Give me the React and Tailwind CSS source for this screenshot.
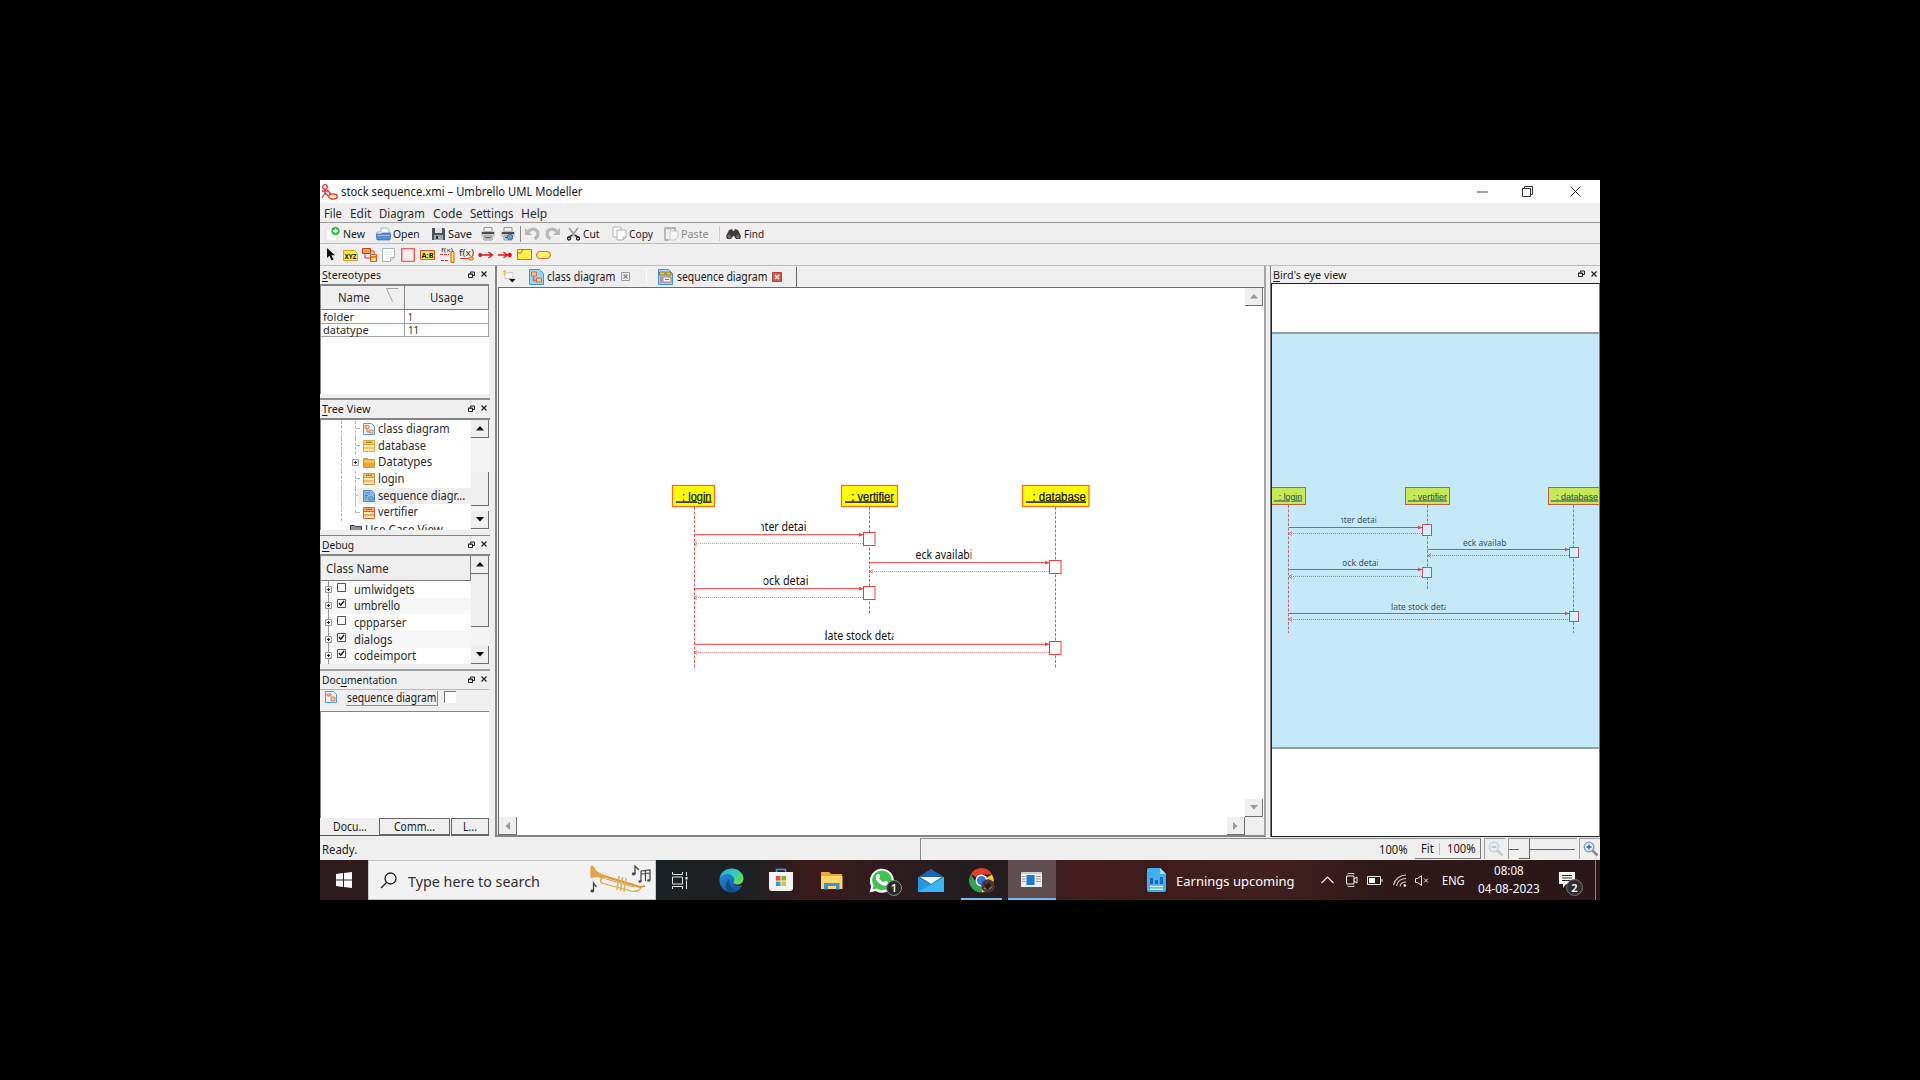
import { useLayoutEffect, useRef } from "react";

// Single line of text squeezed or stretched to the width of its box.
function Fit({ className = "", children }) {
  const box = useRef(null);
  const ink = useRef(null);
  useLayoutEffect(() => {
    const w = ink.current.offsetWidth;
    if (w) ink.current.style.transform = `scaleX(${box.current.offsetWidth / w})`;
  }, []);
  return (
    <span ref={box} className={"block shrink-0 whitespace-nowrap leading-none " + className}>
      <span ref={ink} className="inline-block origin-left">{children}</span>
    </span>
  );
}

function Svg({ w, h, className = "", children }) {
  return (
    <svg width={w} height={h} viewBox={`0 0 ${w} ${h}`} fill="none" className={"block shrink-0 " + className}>
      {children}
    </svg>
  );
}

/* ---------- toolbar icons ---------- */
const AppIcon = () => (
  <Svg w={17} h={16} className="ml-[1px]">
    <circle cx="4" cy="3" r="2.3" stroke="#d8392f" strokeWidth="1.3" />
    <path d="M1 7h7M4 5.5v4M4 9l-3 5M4 9l3 3 3 1M6 6l4 4" stroke="#d8392f" strokeWidth="1.3" />
    <ellipse cx="12" cy="12.5" rx="4.2" ry="2.6" fill="#fbe9a0" stroke="#d8392f" strokeWidth="1.3" />
  </Svg>
);
const NewIcon = () => (
  <Svg w={15} h={16} className="ml-[5px]">
    <path d="M1 3h8l3 3v9H1z" fill="#fafafa" stroke="#ddd" strokeWidth=".8" />
    <circle cx="10.5" cy="5" r="4.2" fill="#3fb34f" />
    <path d="M10.5 2.5v5M8 5h5" stroke="#fff" strokeWidth="1.5" />
  </Svg>
);
const OpenIcon = () => (
  <Svg w={15} h={14} className="ml-[11px]">
    <path d="M1 5h4V1h6l2 2v6H1z" fill="#f6f8fa" stroke="#9aa6b4" strokeWidth=".8" />
    <path d="M0 7h5l1-1h9l-1 7H1z" fill="#5b8fcf" stroke="#3d6ba8" strokeWidth=".7" />
    <path d="M1.5 8.5h12" stroke="#9cc0ea" />
  </Svg>
);
const SaveIcon = () => (
  <Svg w={15} h={14} className="ml-[11px]">
    <path d="M1 1h12l1 1v11H1z" fill="#4d5258" />
    <path d="M4 1h7v5H4z" fill="#dfe3e6" />
    <path d="M3 8h9v5H3z" fill="#9fa6ad" />
    <path d="M5 9h2v3H5z" fill="#33373b" />
  </Svg>
);
const PrintIcon = ({ preview }) => (
  <Svg w={14} h={14} className={preview ? "ml-[6px]" : "ml-[9px]"}>
    <path d="M3 .5h8v4H3z" fill="#eee" stroke="#777" strokeWidth=".7" />
    <path d="M0 4.5h14v5H0z" fill="#c9c9c9" />
    <path d="M1 6h12" stroke="#3d3d3d" strokeWidth="1.8" />
    <path d="M3 9h8v4H3z" fill="#eee" stroke="#777" strokeWidth=".7" />
    <path d="M4 10.7h6" stroke="#444" strokeWidth="1.2" />
    {preview && <circle cx="9" cy="10" r="2.8" fill="#6a9bc8" stroke="#4b6d8e" />}
  </Svg>
);
const UndoIcon = ({ redo }) => (
  <Svg w={15} h={13} className={redo ? "ml-[5px] -scale-x-100" : "ml-[4px]"}>
    <path d="M3 4.500C7 .5 13.500 2 12.800 7.500c-.2 2-1.500 3.500-3.300 4.300" stroke="#b9b9b9" strokeWidth="3.200" />
    <path d="M0 1v7h7z" fill="#b9b9b9" />
  </Svg>
);
const CutIcon = () => (
  <Svg w={13} h={14} className="ml-[7px]">
    <path d="M2 1l7 9M11 1L4 10" stroke="#9a9a9a" strokeWidth="1.6" />
    <path d="M5 8l-3 2M8 8l3 2" stroke="#222" strokeWidth="1.4" />
    <circle cx="2" cy="11.500" r="1.500" stroke="#222" strokeWidth="1.3" />
    <circle cx="11" cy="11.500" r="1.500" stroke="#222" strokeWidth="1.3" />
  </Svg>
);
const CopyIcon = () => (
  <Svg w={15} h={15} className="ml-[12px]">
    <path d="M1 1h8v10H1z" fill="#fcfcfc" stroke="#a9a9a9" strokeWidth=".8" />
    <path d="M5 4h9v7l-3 3H5z" fill="#fff" stroke="#a0a0a0" strokeWidth=".8" />
    <path d="M14 11h-3v3" stroke="#a0a0a0" strokeWidth=".8" />
  </Svg>
);
const PasteIcon = () => (
  <Svg w={15} h={15} className="ml-[11px]">
    <path d="M5 14H1V2h10v3" stroke="#a4a4a4" strokeWidth="1.4" />
    <path d="M3.500 1h5v2.500h-5z" fill="#b5b5b5" />
    <path d="M6 5h8v6l-3 3H6z" fill="#f5f5f5" stroke="#bbb" strokeWidth=".8" />
  </Svg>
);
const FindIcon = () => (
  <Svg w={15} h={12} className="ml-[6px]">
    <path d="M3 2l3-1 1 2h1l1-2 3 1 3 6-1 3h-4L8 8H7l-2 3H1L0 8z" fill="#403b39" />
    <circle cx="3.200" cy="8.500" r="1.700" fill="#77706c" />
    <circle cx="11.800" cy="8.500" r="1.700" fill="#77706c" />
  </Svg>
);

function DiagramTools() {
  return (
    <div className="flex h-[22px] items-center border-b border-[#bdbdbd]">
      <Svg w={9} h={13} className="ml-[7px]">
        <path d="M0 0v10l2.500-2.200L4.500 12.500l2-1-2-4.200H8z" fill="#111" />
      </Svg>
      <Svg w={15} h={12} className="ml-[7px]">
        <path d="M.5 1.500h11l3 3v7H.5z" fill="#fce94f" stroke="#e49a2c" />
        <text x="1.500" y="9.500" fontSize="6.500" fontWeight="700" fill="#222" textLength="12" lengthAdjust="spacingAndGlyphs">XYZ</text>
      </Svg>
      <Svg w={15} h={15} className="ml-[4px]">
        <path d="M.5 1.500h8v5h-8z" fill="#f0a830" stroke="#c8372d" />
        <path d="M3 7v4h5M9 4h3v3" stroke="#c8372d" />
        <path d="M8.500 7.500h6v7h-6z" fill="#fde36a" stroke="#e0542c" />
        <path d="M9 10h5" stroke="#e0542c" strokeWidth="1.400" />
      </Svg>
      <Svg w={13} h={14} className="ml-[5px]">
        <path d="M.5.5h12v9l-4 4h-8z" fill="#fdfdfd" stroke="#a9b3bd" />
        <path d="M12.500 9.500h-4v4" fill="#e3e7ea" stroke="#a9b3bd" />
        <path d="M3 4h7M3 6.500h7" stroke="#dde2e6" />
      </Svg>
      <Svg w={14} h={14} className="ml-[6px]">
        <path d="M.75.75h12.500v12.500H.75z" fill="#f7eeee" stroke="#ee3b36" strokeWidth="1.200" />
      </Svg>
      <Svg w={15} h={10} className="ml-[5px]">
        <path d="M.5.5h14v9H.5z" fill="#fce94f" stroke="#e0542c" />
        <text x="1.500" y="7.500" fontSize="7" fontWeight="700" fill="#111" textLength="12" lengthAdjust="spacingAndGlyphs">A:B</text>
      </Svg>
      <Svg w={15} h={16} className="ml-[5px]">
        <text x="1" y="5" fontSize="6" fill="#333" textLength="12" lengthAdjust="spacingAndGlyphs">f(x)</text>
        <path d="M0 7.500h9M1 13.500h7" stroke="#e33" strokeDasharray="3 1" />
        <path d="M11 4.500h3v11h-3z" fill="#fce94f" stroke="#e0542c" />
      </Svg>
      <Svg w={16} h={13} className="ml-[4px]">
        <text x="0" y="8" fontSize="8.500" fill="#333" textLength="15" lengthAdjust="spacingAndGlyphs">f(x)</text>
        <path d="M1 10.500h14" stroke="#e7401f" />
        <ellipse cx="12" cy="10.500" rx="2.500" ry="1.500" fill="#fce94f" stroke="#e7401f" />
      </Svg>
      <Svg w={16} h={8} className="ml-[3px]">
        <path d="M2 4h12M10.500 1l4 3-4 3" stroke="#e8130c" strokeWidth="1.300" />
        <circle cx="2.200" cy="4" r="2" fill="#e8130c" />
      </Svg>
      <Svg w={16} h={8} className="ml-[3px]">
        <path d="M1 4h12M6.500 1.200l4 2.800-4 2.800" stroke="#e8130c" strokeWidth="1.300" />
        <circle cx="12.700" cy="4" r="2.200" fill="#e8130c" />
      </Svg>
      <Svg w={15} h={11} className="ml-[4px]">
        <path d="M.5.5h14v10H.5z" fill="#fff04d" stroke="#e0642c" />
        <path d="M1 4h3l1.500-3" stroke="#e0642c" />
      </Svg>
      <Svg w={15} h={8} className="ml-[4px]">
        <rect x=".5" y=".5" width="14" height="7" rx="3.500" fill="#fff36a" stroke="#e0642c" />
      </Svg>
    </div>
  );
}

/* ---------- small shared pieces ---------- */
const FloatClose = () => (
  <>
    <Svg w={7} h={7} className="-mt-[2px] ml-auto">
      <path d="M2.500 2V1h4v3.500H5" stroke="#222" />
      <path d="M.5 3h4v3.500h-4zM.5 3.200h4" stroke="#222" />
    </Svg>
    <Svg w={6} h={6} className="-mt-[2px] ml-[6px]">
      <path d="M.5.5l5 5M5.500.5l-5 5" stroke="#222" strokeWidth="1.200" />
    </Svg>
  </>
);

function DockTitle({ className, first, mid, rest }) {
  return (
    <div className="flex h-[18px] shrink-0 items-center pl-[2px] pr-[3px] text-[11.500px]">
      <Fit className={className}>
        {first}
        <span className="underline underline-offset-2">{mid}</span>
        {rest}
      </Fit>
      <FloatClose />
    </div>
  );
}

function ArrowBtn({ dir, off, className = "" }) {
  const d = {
    up: "M4 0l4 4.500H0z",
    down: "M0 0h8L4 4.500z",
    left: "M5 0v8L.5 4z",
    right: "M0 0v8L4.500 4z",
  }[dir];
  const flat = dir === "up" || dir === "down";
  return (
    <div className={"flex h-[18px] w-[18px] shrink-0 items-center justify-center border-b border-r border-[#6f6f6f] bg-[#efefef] " + className}>
      <Svg w={flat ? 8 : 5} h={flat ? 5 : 8}>
        <path d={d} fill={off ? "#9b9b9b" : "#000"} />
      </Svg>
    </div>
  );
}

const Plus = () => (
  <Svg w={7} h={7}>
    <path d="M.5.5h6v6h-6z" fill="#fff" stroke="#999" />
    <path d="M2 3.500h3M3.500 2v3" stroke="#222" />
  </Svg>
);

const ClassIcon = ({ c }) => (
  <Svg w={12} h={12} className="ml-[5px]">
    <path d="M.5.5h11v11H.5z" fill="#fdeba8" stroke={c} />
    <path d="M1 1h10v3H1z" fill={c} opacity=".45" />
    <path d="M1 4.500h10M1 8h10" stroke={c} />
    <path d="M3 2.300h6" stroke="#7a4a1c" strokeDasharray="1.500 .7" />
  </Svg>
);
const DiagIcon = () => (
  <Svg w={12} h={12} className="ml-[5px]">
    <path d="M.5.5h8l3 3v8H.5z" fill="#e8f3fb" stroke="#4aa3dc" />
    <path d="M2 2.500h4v3H2zM6 7h4v3H6z" fill="#f7c7a3" stroke="#dd7448" strokeWidth=".8" />
    <path d="M4 6v3h2" stroke="#dd7448" />
  </Svg>
);
const SeqIcon = () => (
  <Svg w={12} h={12} className="ml-[5px]">
    <path d="M.5.5h8l3 3v8H.5z" fill="#86bce4" stroke="#4a8fc6" />
    <path d="M2 3h5M2 5.500h3M6 7h4v3H6zM3 5v5" stroke="#4b80ae" strokeWidth=".9" />
  </Svg>
);
const FolderIcon = () => (
  <Svg w={12} h={12} className="ml-[5px]">
    <path d="M.5 1.500h4l1 1h6v8H.5z" fill="#e8a92c" stroke="#c58a1b" strokeWidth=".8" />
    <path d="M1 4.500h10.500" stroke="#f7cf6a" strokeWidth="2" />
  </Svg>
);

/* ---------- left dock ---------- */
function Stereotypes() {
  return (
    <div className="flex h-[134px] flex-col border-b-2 border-[#8f8f8f]">
      <DockTitle className="w-[59px]" mid="S" rest="tereotypes" />
      <div className="flex h-[110px] w-[169px] flex-col border-l border-t-2 border-[#858585] bg-white text-[12px] text-[#2b2b2b]">
        <div className="flex h-[24px] shrink-0 border-b border-r border-[#7b7b7b] bg-[#efefef]">
          <div className="flex w-[84px] items-center border-r border-[#8b8b8b] pl-[17px]">
            <Fit className="w-[32px]">Name</Fit>
            <Svg w={13} h={14} className="-mt-[6px] ml-[16px]">
              <path d="M12.500.5H.5l6 13" stroke="#8f8f8f" strokeWidth=".8" />
            </Svg>
          </div>
          <div className="flex items-center pl-[25px]">
            <Fit className="w-[33px]">Usage</Fit>
          </div>
        </div>
        {[["folder", "w-[31px]", "1", "w-[5px]"], ["datatype", "w-[46px]", "11", "w-[11px]"]].map(([n, w, u, uw]) => (
          <div key={n} className="flex h-[13.500px] shrink-0 border-b border-r border-[#a2a2a2] text-[11.500px]">
            <div className="flex w-[84px] items-center border-r border-[#a2a2a2] pl-[2px]">
              <Fit className={w}>{n}</Fit>
            </div>
            <div className="flex items-center pl-[3px]">
              <Fit className={uw}>{u}</Fit>
            </div>
          </div>
        ))}
      </div>
    </div>
  );
}

const TREE = [
  ["class diagram", "w-[72px]", <DiagIcon />],
  ["database", "w-[48px]", <ClassIcon c="#e6a63a" />],
  ["Datatypes", "w-[54px]", <FolderIcon />, true],
  ["login", "w-[26px]", <ClassIcon c="#e08a4c" />],
  ["sequence diagr...", "w-[87px]", <SeqIcon />, false, true],
  ["vertifier", "w-[40px]", <ClassIcon c="#e0603f" />],
];

function TreeView() {
  return (
    <div className="flex h-[136px] flex-col border-b border-[#858585]">
      <DockTitle className="w-[48px]" mid="T" rest="ree View" />
      <div className="flex h-[112px] w-[170px] border-l border-t-2 border-[#858585] bg-white">
        <div className="flex w-[150px] flex-col overflow-hidden pt-[1px] text-[12.500px] text-[#2b2b2b]">
          {TREE.map(([t, w, icon, plus, sel], i) => (
            <div key={t} className="flex h-[16.670px] shrink-0 items-center">
              <div className="ml-[20px] h-full w-px border-l border-dashed border-[#b5b5b5]" />
              <div className="flex h-full w-[16px] items-center pl-[13px]">
                {plus ? (
                  <div className="-ml-[3px] shrink-0"><Plus /></div>
                ) : (
                  <div className={"flex w-[5px] shrink-0 border-l border-dashed border-[#b5b5b5] " + (i === 5 ? "h-1/2 self-start" : "h-full")}>
                    <div className={"w-[4px] border-b border-dashed border-[#b5b5b5] " + (i === 5 ? "h-full" : "h-1/2")} />
                  </div>
                )}
              </div>
              <div className={"flex h-full grow items-center " + (sel ? "bg-[#eeeeee]" : "")}>
                {icon}
                <Fit className={"ml-[3px] " + w}>{t}</Fit>
              </div>
            </div>
          ))}
          <div className="flex h-[16px] shrink-0 items-center pl-[24px] pt-[2px]">
            <Svg w={12} h={11} className="ml-[5px]">
              <path d="M.5 1.500h4l1 1h6v8H.5z" fill="#8d9490" stroke="#444" />
            </Svg>
            <Fit className="ml-[3px] w-[78px]">Use Case View</Fit>
          </div>
        </div>
        <div className="flex w-[19px] flex-col bg-[#f4f4f4]">
          <ArrowBtn dir="up" />
          <div className="mt-[34px] h-[34px] w-[18px] border-b border-r border-[#6f6f6f] bg-[#efefef]" />
          <ArrowBtn dir="down" className="mb-[1px] mt-auto" />
        </div>
      </div>
    </div>
  );
}

const CLASSES = [
  ["umlwidgets", "w-[61px]", false],
  ["umbrello", "w-[46px]", true],
  ["cppparser", "w-[52px]", false],
  ["dialogs", "w-[38px]", true],
  ["codeimport", "w-[62px]", true],
];

function DebugDock() {
  return (
    <div className="flex h-[135px] flex-col border-b-2 border-[#a0a0a0]">
      <DockTitle className="w-[32px]" mid="D" rest="ebug" />
      <div className="flex h-[110px] w-[170px] border-l border-t-2 border-[#858585] bg-white">
        <div className="flex w-[150px] flex-col overflow-hidden text-[12.500px] text-[#2b2b2b]">
          <div className="flex h-[25px] shrink-0 items-center border-b border-r border-[#7b7b7b] bg-[#efefef] pl-[5px] pt-[2px]">
            <Fit className="w-[63px]">Class Name</Fit>
          </div>
          {CLASSES.map(([t, w, on], i) => (
            <div key={t} className={"flex h-[16.670px] shrink-0 items-center pl-[4px] " + (i % 2 ? "bg-[#f6f6f6]" : "")}>
              <div className="flex h-full w-[7px] flex-col items-center">
                <div className="grow border-l border-dashed border-[#999]" />
                <Plus />
                <div className="grow border-l border-dashed border-[#999]" />
              </div>
              <Svg w={9} h={9} className="-mt-[4px] ml-[5px]">
                <path d="M.5.5h8v8h-8z" fill="#fff" stroke="#555" />
                {on && <path d="M2 4l1.800 2.200L7 2" stroke="#111" strokeWidth="1.400" />}
              </Svg>
              <Fit className={"ml-[7.500px] mt-[1px] " + w}>{t}</Fit>
            </div>
          ))}
        </div>
        <div className="flex w-[19px] flex-col bg-[#f4f4f4]">
          <ArrowBtn dir="up" />
          <div className="h-[53px] w-[18px] border-b border-r border-[#6f6f6f] bg-[#efefef]" />
          <ArrowBtn dir="down" className="mt-auto" />
        </div>
      </div>
    </div>
  );
}

function DocumentationDock() {
  return (
    <div className="flex grow flex-col">
      <DockTitle className="w-[75px]" first="Doc" mid="u" rest="mentation" />
      <div className="flex h-[22px] w-[169px] shrink-0 border-t border-[#b8b8b8] pt-px text-[12px]">
        <Svg w={12} h={12} className="ml-[5px]">
          <path d="M.5.5h8l3 3v8H.5z" fill="#e8f3fb" stroke="#4aa3dc" />
          <path d="M2 3h4v2H2zM6 6h4v4H6z" fill="#f7b99a" stroke="#dd7448" strokeWidth=".8" />
        </Svg>
        <div className="ml-[9px] flex h-[15px] w-[92px] items-center border-b border-r border-[#7e93a8] pl-px">
          <Fit className="w-[89px]">sequence diagram</Fit>
        </div>
        <div className="ml-[6px] h-[12px] w-[12px] border-l border-t border-[#777] bg-white" />
      </div>
      <div className="h-[107px] w-[169px] shrink-0 border-l border-t border-[#858585] bg-white" />
      <div className="flex h-[18px] w-[170px] text-[12px]">
        <div className="flex w-[59px] items-center border-b border-[#555] pl-[13px] pt-px">
          <Fit className="w-[34px]">Docu...</Fit>
        </div>
        <div className="flex h-[18px] w-[71px] items-center border border-b-2 border-[#666] pl-[14px]">
          <Fit className="w-[41px]">Comm...</Fit>
        </div>
        <div className="ml-px flex h-[18px] w-[38px] items-center border border-b-2 border-[#666] pl-[11px]">
          <Fit className="w-[14px]">L...</Fit>
        </div>
      </div>
    </div>
  );
}

/* ---------- sequence diagram ---------- */
const MAIN = {
  line: "#ee3a3a", dots: "#f08a8a", fill: "#ffff00", edge: "#f07028", ink: "#111", font: 12, nameFont: 12.500, nameEdge: 0.25, box: "#fff",
  head: [305.500, 21], headEdge: 1.300,
  heads: [["  : login", 352.500, 42, 356, 35.500, 320.500], ["  : vertifier", 521.500, 56, 525, 49, 320.500], ["  : database", 702.500, 66.500, 706, 60, 320.500]],
  lives: [[374.500, 327, 489], [549.500, 327, 434], [735.500, 327, 489]],
  acts: [[543.500, 352.500, 11.500, 13], [543.500, 406.500, 11.500, 13], [729.500, 380.500, 11.500, 13], [729.500, 461.500, 11.500, 13]],
  msgs: [[374, 543, 354.700, 363.500], [550, 729, 382.700, 391.500], [374, 543, 408.700, 417.500], [374, 729, 464.300, 472.500]],
  labels: [["nter detai", 438, 48.500, 351, 441.500, 486], ["eck availabi", 595.500, 57, 379, 595, 651.500], ["ock detai", 442.500, 46, 405, 443.500, 488], ["date stock deta", 501, 76, 460, 505, 573.500]],
};
const BIRD = {
  line: "#bd5468", dots: "#bd7c92", fill: "#c6ea57", edge: "#c0604c", ink: "#36535f", font: 9.500, nameFont: 9.800, nameEdge: 0.1, box: "#d6eefa",
  head: [307.500, 17], headEdge: 1,
  heads: [["  : login", 950, 35.500, 954, 28, 319.500], ["  : vertifier", 1085.500, 44, 1088, 39, 319.500], ["  : database", 1228.500, 54, 1231, 47, 319.500]],
  lives: [[968.500, 325, 453], [1107.500, 325, 409], [1253.500, 325, 453]],
  acts: [[1102.500, 344.500, 9, 11], [1102.500, 387.500, 9, 10], [1249.500, 367.500, 9, 10], [1249.500, 431.500, 9, 10]],
  msgs: [[969, 1102, 347.500, 353.500], [1108, 1249, 369.500, 375.500], [969, 1102, 389.500, 396.500], [969, 1249, 433.500, 439.500]],
  labels: [["nter detai", 1018.500, 38.500, 343, 1021, 1056.500], ["eck availab", 1143, 43.500, 366, 1142, 1187], ["ock detai", 1022, 37, 386, 1022.500, 1058], ["date stock deta", 1068, 60.500, 430, 1071.500, 1126]],
};

function Diagram({ d, id, x, y, w, h }) {
  return (
    <svg width={w} height={h} viewBox={`${x} ${y} ${w} ${h}`} className="block">
      {d.lives.map(([lx, a, b]) => (
        <path key={lx} d={`M${lx} ${a}V${b}`} stroke={d.line} strokeDasharray="3 1.500" opacity=".85" />
      ))}
      {d.msgs.map(([a, b, sy, ry]) => (
        <g key={sy} fill="none" stroke={d.line}>
          <path d={`M${a} ${sy}H${b}`} />
          <path d={`M${b} ${sy}l-4 -2v4z`} fill={d.line} stroke="none" />
          <path d={`M${a} ${ry}H${b}`} stroke={d.dots} strokeDasharray="1 1" />
          <path d={`M${a + 3} ${ry - 2}L${a} ${ry}l3 2`} strokeWidth=".8" />
        </g>
      ))}
      {d.acts.map(([ax, ay, aw, ah]) => (
        <rect key={ax + "-" + ay} x={ax} y={ay} width={aw} height={ah} fill={d.box} stroke={d.line} />
      ))}
      {d.heads.map(([t, bx, bw, tx, tw, ty]) => (
        <g key={t}>
          <rect x={bx} y={d.head[0]} width={bw} height={d.head[1]} fill={d.fill} stroke={d.edge} strokeWidth={d.headEdge} />
          <text x={tx} y={ty} xmlSpace="preserve" fontSize={d.nameFont} fill={d.ink} stroke={d.ink} strokeWidth={d.nameEdge} textLength={tw} lengthAdjust="spacingAndGlyphs" textDecoration="underline" className="whitespace-pre font-['Liberation_Sans',sans-serif]">{t}</text>
        </g>
      ))}
      {d.labels.map(([t, tx, tw, ty, c0, c1]) => (
        <g key={t} clipPath={`url(#${id}${ty})`}>
          <clipPath id={id + ty}>
            <rect x={c0} y={ty - 14} width={c1 - c0} height="20" />
          </clipPath>
          <text x={tx} y={ty} fontSize={d.font} fill={d.ink} textLength={tw} lengthAdjust="spacingAndGlyphs">{t}</text>
        </g>
      ))}
    </svg>
  );
}

function CenterArea() {
  return (
    <div className="ml-[5px] flex h-[571px] w-[771px] shrink-0 flex-col border-b-2 border-l-2 border-r-2 border-[#858585] border-r-[#a5a5a5]">
      <div className="flex h-[21px] shrink-0 items-center text-[12px]">
        <Svg w={14} h={14} className="ml-[5px]">
          <path d="M3 2.500h8v6H3z" fill="#fafafa" stroke="#ccc" />
          <path d="M1 1l3 3M4 1L1 4M2.500 0v5" stroke="#e9c63b" />
          <path d="M7 9h6.500L10.200 12.500z" fill="#111" />
        </Svg>
        <Svg w={15} h={16} className="ml-[13px]">
          <path d="M.5.5h10l4 4v11H.5z" fill="#9ed3f5" stroke="#3a98da" />
          <path d="M2.500 3h5v4h-5zM7.500 9h5v4h-5z" fill="#f9c9a0" stroke="#dc6a3c" />
          <path d="M4.500 7.500v4h3" stroke="#dc6a3c" strokeWidth="1.500" />
        </Svg>
        <Fit className="ml-[3px] w-[68px]">class diagram</Fit>
        <Svg w={9} h={9} className="ml-[6px]">
          <path d="M.5.5h8v8h-8z" fill="#efefef" stroke="#999" />
          <path d="M2.500 2.500l4 4M6.500 2.500l-4 4" stroke="#888" strokeWidth="1.400" />
        </Svg>
        <div className="ml-[16px] h-[17px] w-px bg-[#fbfbfb]" />
        <Svg w={15} h={16} className="ml-[11px]">
          <path d="M.5.5h10l4 4v11H.5z" fill="#9ed3f5" stroke="#3a98da" />
          <path d="M1.500 3h5.500v3H1.500zM8 3h5v3H8z" fill="#e0c84a" stroke="#6b6130" strokeWidth=".7" />
          <path d="M5 8h8v5H5z" fill="#fff" stroke="#dc6a3c" />
          <path d="M7 10.500h4M3 7v7" stroke="#c54" />
        </Svg>
        <Fit className="ml-[4px] w-[90px]">sequence diagram</Fit>
        <Svg w={10} h={10} className="ml-[5px]">
          <path d="M.5.5h9v9h-9z" fill="#d9574c" stroke="#b9433a" />
          <path d="M3 3l4 4M7 3L3 7" stroke="#fff" strokeWidth="1.500" />
        </Svg>
        <div className="ml-[14px] h-[20px] w-px bg-[#666]" />
      </div>
      <div className="ml-[1px] flex grow border-l border-t border-[#6a6a6a] bg-white">
        <div className="flex w-[746px] flex-col">
          <Diagram d={MAIN} id="m" x={179} y={108} w={746} h={529} />
          <div className="flex h-[18px] justify-between">
            <ArrowBtn dir="left" off />
            <ArrowBtn dir="right" off />
          </div>
        </div>
        <div className="flex flex-col">
          <ArrowBtn dir="up" off />
          <ArrowBtn dir="down" off className="mt-auto" />
          <div className="h-[18px] w-[19px] bg-[#efefef]" />
        </div>
      </div>
    </div>
  );
}

function BirdsEye() {
  return (
    <div className="ml-[4px] flex h-[571px] w-[330px] flex-col border-l border-[#777]">
      <div className="flex h-[17px] shrink-0 items-center pl-[2px] pr-[3px] text-[11.500px]">
        <Fit className="w-[74px]"><span className="underline underline-offset-2">B</span>ird's eye view</Fit>
        <FloatClose />
      </div>
      <div className="flex grow flex-col border border-[#222] border-r-[#777] bg-white">
        <div className="mt-[48px] h-[417px] border-y-2 border-[#9c9c9c] bg-[#c6e9f8]">
          <Diagram d={BIRD} id="b" x={952} y={154} w={327} h={413} />
        </div>
      </div>
    </div>
  );
}

const Magnifier = ({ sign, faded, className = "" }) => (
  <Svg w={16} h={16} className={className}>
    <g opacity={faded ? 0.35 : 1}>
      <path d="M9.500 9.500l5 5" stroke="#8c8c8c" strokeWidth="2.600" />
      <circle cx="6" cy="6" r="4.800" fill="#dcebfa" stroke="#7f93ad" strokeWidth="1.200" />
      <path d={sign === "+" ? "M3.500 6h5M6 3.500v5" : "M3.500 6h5"} stroke="#2d62a8" strokeWidth="1.400" />
    </g>
  </Svg>
);

function StatusBar() {
  return (
    <div className="flex h-[23px] shrink-0 pt-[1px] text-[12px]">
      <div className="flex w-[600px] items-center pl-[2px] pt-px">
        <Fit className="w-[35px]">Ready.</Fit>
      </div>
      <div className="flex w-[495px] items-center border-l border-t border-[#888] pl-[458px]">
        <Fit className="w-[29px]">100%</Fit>
      </div>
      <div className="flex h-[21px] w-[66px] items-center border-b border-r border-t border-[#777] border-t-[#999] pl-[6px] pt-px">
        <Fit className="w-[13px]">Fit</Fit>
        <div className="ml-[5px] h-[12px] w-px bg-[#bbb]" />
        <Fit className="ml-[7px] w-[29px]">100%</Fit>
      </div>
      <div className="ml-[3px] flex h-[21px] w-[22px] items-center justify-center border-l border-t border-[#999]">
        <Magnifier faded />
      </div>
      <div className="ml-[2px] flex h-[21px] w-[69px] items-center border-l border-t border-[#999]">
        <div className="h-px w-[10px] bg-[#666]" />
        <div className="h-[20px] w-[11px] border-b border-r border-[#666] bg-[#efefef]" />
        <div className="h-px w-[45px] bg-[#666]" />
      </div>
      <div className="ml-[2px] flex h-[21px] w-[21px] items-center border-l border-t border-[#999]">
        <Magnifier sign="+" className="ml-[3px]" />
      </div>
    </div>
  );
}

/* ---------- taskbar ---------- */
function Trumpet() {
  return (
    <Svg w={61} h={30} className="ml-[50px]">
      <path d="M2 2c2 5 8 8 18 11l30 9" stroke="#d9962f" strokeWidth="2" />
      <path d="M1 1c2-1 3 0 4 3 2 4 6 5 12 7l-2 3C9 12 5 12 1 13 0 10 0 4 1 1z" fill="#e6a544" />
      <path d="M12 13c-3 3-1 5 3 6l26 7c6 1 9-1 10-4M16 14l28 8" stroke="#dfa244" strokeWidth="1.200" />
      <path d="M29 11l-2 14M32.500 12l-2 14M36 13l-2 14" stroke="#e5ae52" strokeWidth="1.500" />
      <path d="M50 22l5-1" stroke="#c58a33" strokeWidth="1.500" />
      <path d="M45 9V1l4 4M3.500 26v-8l3 4" stroke="#444" strokeWidth="1.300" />
      <ellipse cx="43.700" cy="9" rx="2" ry="1.400" fill="#444" />
      <ellipse cx="2.300" cy="26" rx="2" ry="1.400" fill="#444" />
      <path d="M51 16V6l9-1v10M55.500 16V6M51 9l9-1" stroke="#444" strokeWidth="1.200" />
      <ellipse cx="50" cy="16.500" rx="1.600" ry="1.200" fill="#444" />
      <ellipse cx="58.800" cy="15.500" rx="1.600" ry="1.200" fill="#444" />
    </Svg>
  );
}

function Taskbar() {
  return (
    <div className="flex h-[40px] shrink-0 items-center bg-[linear-gradient(90deg,#2d1b1d_0px,#2d1b1d_48px,#1b2124_340px,#1e2022_430px,#3b1a1b_490px,#2e1d1f_570px,#231d1f_640px,#261c1e_685px,#451d1e_760px,#3d1b1c_830px,#42201e_950px,#2f181a_1060px,#2a1618_1280px)] text-white">
      <div className="flex h-full w-[48px] items-center pl-[16px]">
        <Svg w={16} h={16}>
          <path d="M0 2l7-1v6.500H0zM8 .9L16 0v7.500H8zM0 8.500h7V15l-7-1zM8 8.500h8V16l-8-1z" fill="#fff" />
        </Svg>
      </div>
      <div className="flex h-full w-[288px] shrink-0 items-center border border-[#c9c9c9] bg-[#f2f2f2] pl-[11px] text-[#2f2f2f]">
        <Svg w={17} h={17}>
          <circle cx="10.500" cy="6.500" r="5.500" stroke="#222" strokeWidth="1.300" />
          <path d="M6.500 10.500L1 16" stroke="#222" strokeWidth="1.300" />
        </Svg>
        <Fit className="ml-[11px] mt-[3px] w-[132px] text-[14px]">Type here to search</Fit>
        <Trumpet />
      </div>
      <Svg w={17} h={17} className="ml-[15px]">
        <path d="M1.500 0v2.500h10V0M1.500 5h10v7h-10zM1.500 17v-2.500h10V17M15.500 0v4M15.500 8.500V17" stroke="#e8e8e8" />
        <path d="M14.500 5h2v2.500h-2z" fill="#fff" />
      </Svg>
      <Svg w={25} h={25} className="ml-[31px]">
        <defs>
          <linearGradient id="e1" x1="0" y1="0" x2="1" y2=".6"><stop stopColor="#2aa3dc" /><stop offset=".6" stopColor="#36c9c0" /><stop offset="1" stopColor="#67d94f" /></linearGradient>
          <linearGradient id="e2" x1="0" y1="0" x2=".5" y2="1"><stop stopColor="#1b8ad8" /><stop offset="1" stopColor="#1256a8" /></linearGradient>
        </defs>
        <path d="M.6 11C1 5 6 .5 12.500.5c7 0 12 5 12 10 0 4-3 6-6 6-4 0-5-1.500-4-3C16 9 12 6 8 6.500 4 7 1.500 9 .6 11z" fill="url(#e1)" />
        <path d="M.5 12C1 8.500 4.500 6.500 8 6.500c5 0 8 3 6.500 6.500-1 1 0 5 5 5 1.500 0 3-.5 4-1-2 4.500-6 7.500-11 7.500C6 24.500.5 19.500.5 12z" fill="url(#e2)" />
        <path d="M9 23.500C6 20 6 14 10.500 11c-1 6 2 11 8 11-3 2.500-7 2.500-9.500 1.500z" fill="#124c8f" />
      </Svg>
      <Svg w={24} h={24} className="ml-[25px]">
        <path d="M7.500 5V1.500h9V5" stroke="#3c9be8" strokeWidth="1.500" />
        <path d="M0 4h24v16a3 3 0 0 1-3 3H3a3 3 0 0 1-3-3z" fill="#f3f3f3" />
        <path d="M7 8h4.500v4.500H7z" fill="#e8502f" />
        <path d="M12.500 8H17v4.500h-4.500z" fill="#7db72f" />
        <path d="M7 13.500h4.500V18H7z" fill="#2a9fe0" />
        <path d="M12.500 13.500H17V18h-4.500z" fill="#f7b923" />
      </Svg>
      <Svg w={22} h={19} className="ml-[28px]">
        <path d="M0 1h8l2 2h11v15H0z" fill="#e9ac34" />
        <path d="M0 5h21.500v13H0z" fill="#fbd76b" />
        <path d="M3 18.500V12h15.500v6.500H15V15H7v3.500z" fill="#3f93d2" />
      </Svg>
      <div className="relative ml-[26px]">
        <Svg w={25} h={25}>
          <path d="M.5 24.500l1.700-6.300A12 12 0 1 1 6.700 23z" fill="#fff" />
          <path d="M3.500 21.500l1.100-4A9.800 9.800 0 1 1 7.500 20.500z" fill="#3fc351" />
          <path d="M8 6.500c1-1 2-.8 2.300 0l.8 2c.2.700-.8 1.500-1 1.800 1 2 2.500 3.200 4.500 4 .5-.5 1.300-1.700 1.900-1.500l2.200 1c.8.500.3 2-.2 2.700-1 1.200-3 1.500-5 .7-3.500-1.300-5.500-4-6.200-5.500C6.500 9.700 6.800 7.500 8 6.500z" fill="#fff" />
        </Svg>
        <span className="absolute -right-[8px] top-[12px] flex h-[16px] w-[16px] items-center justify-center rounded-full border border-[#888] bg-[#2a2a2a] text-[11px] font-semibold leading-none">1</span>
      </div>
      <Svg w={26} h={23} className="ml-[24px]">
        <path d="M0 8L13 0l13 8v15H0z" fill="#1a64b0" />
        <path d="M0 8l13 8L26 8v15H0z" fill="#2497e3" />
        <path d="M0 23l16-9 10-6v15z" fill="#38b6f5" />
        <path d="M2 8h22l-11 7z" fill="#f1f6fb" />
      </Svg>
      <div className="ml-[17px] flex h-full w-[41px] flex-col border-b-2 border-[#76b9ed] pl-[8px] pt-[8px]">
        <Svg w={26} h={25}>
          <path d="M12.500 12.500L1.900 6.300A12 12 0 0 1 23 6.500h-10.500z" fill="#e33b2e" />
          <path d="M12.500 12.500L23 6.500a12 12 0 0 1-10.500 18z" fill="#f9cb2e" />
          <path d="M12.500 24.500A12 12 0 0 1 1.900 6.300l5.500 9 5.100 2.700z" fill="#31a352" />
          <circle cx="12.500" cy="12.500" r="6" fill="#fff" />
          <circle cx="12.500" cy="12.500" r="4.600" fill="#2b77e5" />
          <circle cx="19" cy="18" r="6.700" fill="#4a3833" />
          <path d="M15 16l3 1 2-3 2 4-3 3-2-1z" fill="#221c1d" />
          <path d="M20 21l3-2M15 20l2 1" stroke="#8a6656" strokeWidth="1.400" />
        </Svg>
      </div>
      <div className="ml-[6px] flex h-full w-[48px] shrink-0 items-center border-b-2 border-[#76b9ed] bg-[#5f4d4f] pl-[13px]">
        <Svg w={21} h={15}>
          <path d="M0 0h21v15H0z" fill="#f0f0f0" />
          <path d="M0 0h21v2H0z" fill="#c9cdd0" />
          <path d="M5.500 3h8v10h-8z" fill="#1b7bd6" />
          <path d="M1 4.500h3.500M1 7h3.500M1 9.500h3.500M15 4.500h5M15 7h5M15 9.500h5" stroke="#999" />
        </Svg>
      </div>
      <Svg w={19} h={24} className="ml-[91px]">
        <path d="M2 0h11l6 6v16a2 2 0 0 1-2 2H2a2 2 0 0 1-2-2V2a2 2 0 0 1 2-2z" fill="#3fb0f2" />
        <path d="M13 0l6 6h-6z" fill="#a8dcfa" />
        <path d="M3 10h3v6H3zM8 12h3v4H8zM13 9h3v7h-3z" fill="#1767b5" />
        <path d="M3 18.500h13M3 21.200h13" stroke="#d7effc" strokeWidth="1.500" />
      </Svg>
      <Fit className="ml-[10px] mt-[2px] w-[119px] text-[13px]">Earnings upcoming</Fit>
      <Svg w={13} h={8} className="ml-[26px]">
        <path d="M.5 7l6-6 6 6" stroke="#eee" strokeWidth="1.200" />
      </Svg>
      <Svg w={12} h={14} className="ml-[12px]">
        <rect x=".5" y="3" width="7.500" height="8" rx="1" stroke="#eee" strokeWidth="1.100" />
        <path d="M8 6l3-2v6L8 8M1.500 1c2-1 5-1 7 0M1.500 13c2 1 5 1 7 0" stroke="#eee" />
      </Svg>
      <Svg w={16} h={9} className="ml-[9px]">
        <path d="M.5.5h13v8H.5zM15 3v3" stroke="#eee" />
        <path d="M2 2h6v5H2z" fill="#fff" />
      </Svg>
      <Svg w={14} h={13} className="ml-[10px]">
        <path d="M.5 11C2 5 7 1 13 1M3.500 12C4.500 7.500 8 4.500 13 4.500M7 12.500C7.500 9.500 10 8 13 8" stroke="#d6cccc" strokeWidth="1.100" />
        <circle cx="11.800" cy="11.500" r="1.300" fill="#fff" />
      </Svg>
      <Svg w={15} h={11} className="ml-[8px]">
        <path d="M.5 3.500h2L6.500.7v9.600L2.500 7.500h-2zM9 3.500l4 4M13 3.500l-4 4" stroke="#eee" />
      </Svg>
      <Fit className="ml-[11.500px] mt-px w-[23px] text-[12px]">ENG</Fit>
      <div className="ml-[13px] flex h-full w-[62px] flex-col items-center gap-[6px] pt-[5px] text-[12px]">
        <Fit className="w-[30px]">08:08</Fit>
        <Fit className="w-[62px]">04-08-2023</Fit>
      </div>
      <div className="relative ml-[19.500px]">
        <Svg w={16} h={17}>
          <path d="M0 0h16v12H7l-3 4v-4H0z" fill="#fff" />
          <path d="M3 3.500h10M3 6h10M3 8.500h10" stroke="#382224" />
        </Svg>
        <span className="absolute -right-[8px] top-[7px] flex h-[17px] w-[17px] items-center justify-center rounded-full border border-[#777] bg-[#303030] text-[11px] font-semibold leading-none">2</span>
      </div>
      <div className="ml-[20px] h-full w-px bg-[#8b7c7d]" />
    </div>
  );
}

export default function App() {
  return (
    <div className="flex h-[1080px] w-[1920px] items-center justify-center bg-black">
      <div className="flex h-[720px] w-[1280px] flex-col overflow-hidden bg-[#efefef] font-['Noto_Sans','Open_Sans',sans-serif] text-[#1a1a1a]">
        <div className="flex h-[23px] shrink-0 items-center bg-white text-[12px]">
          <AppIcon />
          <Fit className="ml-[3px] w-[241px]">stock sequence.xmi – Umbrello UML Modeller</Fit>
          <Svg w={11} h={2} className="ml-auto"><path d="M0 1h11" stroke="#444" /></Svg>
          <Svg w={11} h={11} className="ml-[34px]">
            <path d="M.5 2.500h8v8h-8zM2.500 2.500v-2h8v8h-2" stroke="#333" />
          </Svg>
          <Svg w={11} h={11} className="ml-[37px] mr-[19px]">
            <path d="M.5.5l10 10M10.500.5l-10 10" stroke="#333" />
          </Svg>
        </div>
        <div className="flex h-[20px] shrink-0 items-center border-b border-[#9a9a9a] pl-[4px] pt-[1px] text-[13px] text-[#2b2b2b]">
          <Fit className="w-[18px]">File</Fit>
          <Fit className="ml-[8px] w-[21px]">Edit</Fit>
          <Fit className="ml-[8px] w-[46px]">Diagram</Fit>
          <Fit className="ml-[8px] w-[29px]">Code</Fit>
          <Fit className="ml-[8px] w-[43px]">Settings</Fit>
          <Fit className="ml-[8px] w-[26px]">Help</Fit>
        </div>
        <div className="flex h-[21px] shrink-0 items-center border-b border-[#bdbdbd] pt-px text-[11.500px]">
          <NewIcon />
          <Fit className="ml-[3px] w-[22px]">New</Fit>
          <OpenIcon />
          <Fit className="ml-[2px] w-[27px]">Open</Fit>
          <SaveIcon />
          <Fit className="ml-[2px] w-[24px]">Save</Fit>
          <PrintIcon />
          <PrintIcon preview />
          <div className="ml-[5px] h-[16px] w-px bg-[#8a8a8a]" />
          <UndoIcon />
          <UndoIcon redo />
          <CutIcon />
          <Fit className="ml-[3px] w-[17px]">Cut</Fit>
          <CopyIcon />
          <Fit className="ml-[2px] w-[24px]">Copy</Fit>
          <PasteIcon />
          <Fit className="ml-[2px] w-[28px] text-[#8c8c8c]">Paste</Fit>
          <div className="ml-[10px] h-[15px] w-px bg-[#ccc]" />
          <FindIcon />
          <Fit className="ml-[3px] w-[20px]">Find</Fit>
        </div>
        <DiagramTools />
        <div className="flex h-[571px] shrink-0">
          <div className="flex w-[170px] shrink-0 flex-col">
            <Stereotypes />
            <TreeView />
            <DebugDock />
            <DocumentationDock />
          </div>
          <CenterArea />
          <BirdsEye />
        </div>
        <StatusBar />
        <Taskbar />
      </div>
    </div>
  );
}
